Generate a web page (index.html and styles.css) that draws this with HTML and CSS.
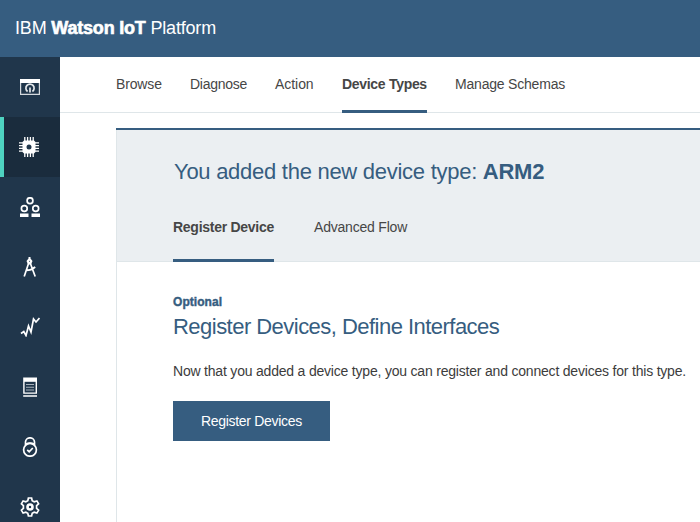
FILE: index.html
```html
<!DOCTYPE html>
<html lang="en">
<head>
<meta charset="utf-8">
<title>IBM Watson IoT Platform</title>
<link rel="stylesheet" href="styles.css">
</head>
<body>
<header class="topbar"><span class="brand">IBM <b>Watson IoT</b> Platform</span></header>
<div class="shell">
  <nav class="rail">
    <a class="rail-item"><svg viewBox="0 0 20 20"><path class="line frame" d="M.6 2.600h18.800v14.800H.6z"/><path class="line soft" d="M7.600 14.500a4.100 4.100 0 1 1 4.800 0M10 10.500v5"/><path class="solid" d="M0 2h20v4H0z"/></svg></a>
    <a class="rail-item rail-active"><svg viewBox="0 0 20 20"><path class="pin" d="M5.800 0v20M8.600 0v20M11.400 0v20M14.200 0v20M0 5.800h20M0 8.600h20M0 11.400h20M0 14.200h20"/><path class="solid" d="M5 3.500h10l1.500 1.500v10L15 16.500H5L3.500 15V5z"/><circle class="hole" cx="10" cy="10" r="2.500"/></svg></a>
    <a class="rail-item"><svg viewBox="0 0 20 20"><g class="line thick"><circle cx="10" cy="3.700" r="2.900"/><circle cx="4.300" cy="11.500" r="2.900"/><circle cx="15.700" cy="11.500" r="2.900"/></g><path class="solid" d="M0 16.500h8.500V20H0zM11.500 16.500H20V20h-8.500z"/></svg></a>
    <a class="rail-item"><svg viewBox="0 0 20 20"><path class="line thick" d="M8.700 6L4.200 19.500M10.200 6l5 13.500M6.200 13.300c3 0 6-.7 9-3.300"/><path class="solid" d="M8.500 0h2v1.500l2 2.500-1.500 3.500H8L6.500 4l2-2.500z"/><circle class="dot" cx="9.500" cy="4.300" r=".5"/></svg></a>
    <a class="rail-item"><svg viewBox="0 0 20 20"><path class="line thick" d="M1 16.500L3.800 14.500l2.200 4L8.500 9l2.500 6L13.500 2l2.500 3L19.500 1"/></svg></a>
    <a class="rail-item"><svg viewBox="0 0 20 20"><path class="line" d="M3.900 1.200h12.400v14.900H3.900zM3.200 19h13.800"/><path class="solid" d="M4 1h12v3.800H4z"/><path class="rule" d="M6 7.500h8M6 10.300h8M6 13h8"/></svg></a>
    <a class="rail-item"><svg viewBox="0 0 20 20"><g class="line thick"><circle cx="10" cy="12.800" r="6.400"/><path d="M5.500 8V5a4.500 4.200 0 0 1 9 0v3M5.500 7.500c3-1.700 6-1.700 9 0M7.200 12.800l2 2 3.600-3.800"/></g></svg></a>
    <a class="rail-item"><svg viewBox="0 0 20 20"><path class="line thick" d="M8.400 1h3.200l.6 2.700 2 1.100 2.700-.9 1.700 2.900-2 1.900v2.600l2 1.900-1.700 2.900-2.700-.9-2 1.100-.6 2.700H8.400l-.6-2.700-2-1.100-2.700.9-1.700-2.900 2-1.900V8.700l-2-1.900 1.700-2.900 2.700.9 2-1.100z"/><circle class="ring" cx="10" cy="10" r="2.500"/></svg></a>
  </nav>
  <main class="content">
    <nav class="tabs">
      <a class="tab t1">Browse</a><a class="tab t2">Diagnose</a><a class="tab t3">Action</a><a class="tab t4 tab-active">Device Types</a><a class="tab t5">Manage Schemas</a>
    </nav>
    <section class="card">
      <div class="card-head">
        <h1>You added the new device type: <b>ARM2</b></h1>
        <nav class="subtabs"><a class="subtab tab-active">Register Device</a><a class="subtab">Advanced Flow</a></nav>
      </div>
      <div class="card-body">
        <div class="optional">Optional</div>
        <h2>Register Devices, Define Interfaces</h2>
        <p>Now that you added a device type, you can register and connect devices for this type.</p>
        <button class="primary">Register Devices</button>
      </div>
    </section>
  </main>
</div>
</body>
</html>
```
FILE: styles.css
```css
* { box-sizing: border-box; }
body {
  margin: 0;
  height: 522px;
  overflow: hidden;
  background: #fff;
  color: #464646;
  font: 14px/20px "Liberation Sans", Arial, sans-serif;
}
.topbar {
  height: 57px;
  padding: 16px 15px 0;
  background: #365d80;
  color: #fff;
}
.brand { font-size: 18px; line-height: 24px; letter-spacing: -.19px; white-space: nowrap; }
.brand b { -webkit-text-stroke: .6px #fff; }
.shell { display: flex; height: 465px; }
.rail { flex: 0 0 60px; background: #20364b; overflow: hidden; }
.rail-item {
  display: flex;
  align-items: center;
  justify-content: center;
  height: 60px;
}
.rail-item:last-child { height: 45px; align-items: flex-start; padding-top: 20px; }
.rail-active { background: #1a2c3d; border-left: 4px solid #4ed2c0; padding-right: 6px; }
.rail svg { flex: none; width: 20px; height: 20px; }
.line { fill: none; stroke: #fff; stroke-width: 1.4; }
.thick { stroke-width: 1.7; }
.frame { stroke: #d5dade; stroke-width: 1.2; }
.soft { stroke: #e4e8eb; stroke-width: 1.7; }
.pin { stroke: #fff; stroke-width: 1.3; }
.solid { fill: #fff; }
.hole, .dot { fill: #20364b; }
.rule { stroke: #a8b2bc; stroke-width: 1.1; }
.ring { fill: none; stroke: #fff; stroke-width: 2.6; }
.content { flex: 1; min-width: 0; }
.tabs {
  display: flex;
  gap: 28px;
  height: 56px;
  padding-left: 56px;
  border-bottom: 1px solid #dfe6e9;
}
.tab { height: 56px; padding-top: 17px; white-space: nowrap; }
.t1 { width: 46px; letter-spacing: -.15px; }
.t2 { width: 57px; letter-spacing: -.25px; }
.t3 { width: 39px; letter-spacing: -.05px; }
.t4 { width: 85px; letter-spacing: -.3px; }
.t5 { letter-spacing: -.2px; }
.tab-active { font-weight: 700; border-bottom: 3px solid #365d80; }
.card {
  height: 394px;
  margin: 15px 0 0 56px;
  border-top: 2px solid #365d80;
}
.card-head {
  height: 132px;
  padding: 28px 0 0 57px;
  background: #ebeff2;
  border-left: 1px solid #dfe6e9;
  border-bottom: 1px solid #dfe6e9;
}
h1, h2 { margin: 0; font-size: 22px; line-height: 28px; font-weight: 400; color: #365d80; white-space: nowrap; }
h1 { letter-spacing: -.27px; }
.subtabs { display: flex; gap: 40px; margin: 31px 0 0 -1px; }
.subtab { height: 45px; letter-spacing: -.2px; white-space: nowrap; }
.subtab.tab-active { width: 101px; letter-spacing: -.27px; }
.card-body { height: 260px; padding: 30px 0 0 56px; border-left: 1px solid #dfe6e9; }
.optional { font-size: 12px; font-weight: 700; color: #365d80; letter-spacing: .05px; -webkit-text-stroke: .4px #365d80; }
h2 { padding-top: 1px; letter-spacing: -.53px; }
p { margin: 20px 0 20px; letter-spacing: -.2px; white-space: nowrap; color: #3c3c3c; }
.primary {
  width: 157px;
  height: 40px;
  padding: 0;
  border: 0;
  background: #365d80;
  color: #fff;
  font: inherit;
  letter-spacing: -.3px;
}
```
